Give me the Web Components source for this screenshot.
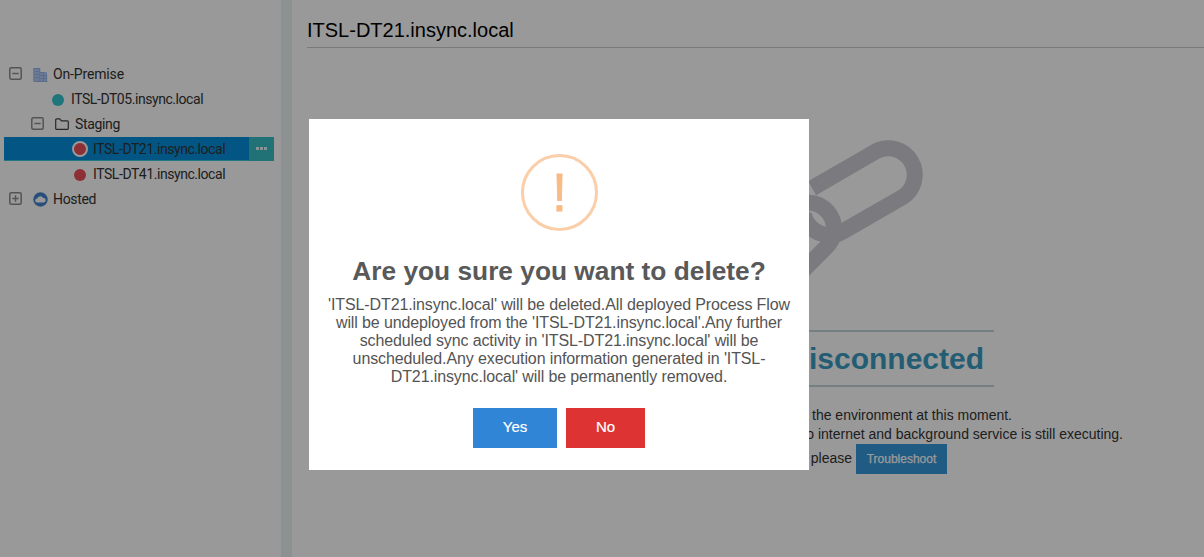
<!DOCTYPE html>
<html lang="en">
<head>
<meta charset="utf-8">
<title>Environments</title>
<style>
html,body{margin:0;height:100%;overflow:hidden;background:#fff}
body{font-family:"Liberation Sans",Arial,sans-serif}
</style>
</head>
<body>
<app-shell></app-shell>
<script>
function define(name, html) {
  const t = document.createElement('template');
  t.innerHTML = html;
  customElements.define(name, class extends HTMLElement {
    constructor() {
      super();
      this.attachShadow({mode: 'open'}).appendChild(t.content.cloneNode(true));
    }
  });
}

define('tree-toggle', `<style>
:host{display:block;width:13px;height:13px;flex:none;margin-top:-2px}
svg{display:block}
.v{display:none}
:host([closed]) .v{display:block}
</style><svg width="13" height="13" fill="none" stroke="#8c8c8c" stroke-width="1.5"><rect x=".8" y=".8" width="11.4" height="11.4" rx="1.5"/><path d="M3.3 6.5h6.4"/><path class="v" d="M6.5 3.3v6.4"/></svg>`);

define('status-dot', `<style>
:host{display:block;box-sizing:border-box;width:12px;height:12px;border-radius:50%;background:var(--dot,#e9505a);flex:none}
:host([ring]){width:16px;height:16px;border:2px solid #fff}
</style>`);

define('tree-row', `<style>
:host{display:flex;height:25px;align-items:center;box-sizing:border-box;padding-left:var(--indent,5px);font:14px/25px Roboto,sans-serif;color:#333;white-space:nowrap}
.label{letter-spacing:var(--track,-.44px)}
.bar{display:flex;align-items:center;flex:1;height:24px}
:host([selected]){padding-left:0;align-items:flex-start}
:host([selected]) .bar{background:#0590dd;height:23px;padding-left:var(--indent);border-bottom:1px solid #37c6d0}
:host([selected]) .label{padding-top:2px}
.more{display:none}
:host([selected]) .more{display:flex;width:25px;height:24px;background:#37bfc6;align-items:center;justify-content:center;gap:1px}
.more i{width:3px;height:3px;background:#fff;margin-bottom:1px;opacity:.85}
.gap{width:var(--gap,5px);flex:none}
</style><div class="bar"><slot name="icon"></slot><span class="gap"></span><span class="label"><slot></slot></span></div><div class="more"><i></i><i></i><i></i></div>`);

define('env-tree', `<style>
:host{display:block;width:281px;box-sizing:border-box;padding:62px 7px 0 4px;flex:none}
.ic{display:flex;align-items:center}
svg{display:block}
</style>
<tree-row style="--gap:5px;--track:-.15px"><div class="ic" slot="icon"><tree-toggle></tree-toggle><svg style="margin-left:11px" width="15" height="15" viewBox="0 0 15 15"><path d="M1 1h6v13H1zM7 5h7v9H7z" fill="#b5cdf5"/><path d="M.5 14.5h14M.8 1v13M6.8 1v13M10.5 5v9M13.6 7v7M1 1.5h6M7 5.5h4M11 8.5h3M2.5 4.5h3M2.5 7.5h3M2.5 10.5h3M8 8.5h2M8 11.5h5" fill="none" stroke="#8fb0e6" stroke-width=".9"/></svg></div>On-Premise</tree-row>
<tree-row style="--indent:48px;--gap:7px"><status-dot slot="icon" style="--dot:#33c5cf"></status-dot>ITSL-DT05.insync.local</tree-row>
<tree-row style="--indent:27px;--gap:6px;--track:-.35px"><div class="ic" slot="icon"><tree-toggle></tree-toggle><svg style="margin-left:11px;margin-top:-2px" width="14" height="12" fill="none" stroke="#444" stroke-width="1.2"><path d="M.7 10.5V1.8q0-1 1-1h3l1.7 2h6q.9 0 .9.9v6.8q0 .8-.8.8H1.5q-.8 0-.8-.8z"/></svg></div>Staging</tree-row>
<tree-row selected style="--indent:68px;--gap:5px"><status-dot ring slot="icon"></status-dot>ITSL-DT21.insync.local</tree-row>
<tree-row style="--indent:70px;--gap:7px"><status-dot slot="icon"></status-dot>ITSL-DT41.insync.local</tree-row>
<tree-row style="--gap:5px;--track:-.35px"><div class="ic" slot="icon"><tree-toggle closed></tree-toggle><svg style="margin-left:11px" width="15" height="15"><circle cx="7.5" cy="7.5" r="7.2" fill="#4384cf"/><path d="M4.2 10.5a2 2 0 0 1 0-4 3.2 3.2 0 0 1 6-.4 2.2 2.2 0 0 1 .5 4.4z" fill="#fff"/></svg></div>Hosted</tree-row>`);

define('link-picture', `<style>:host{display:block;height:150px;width:140px}svg{display:block}</style>
<svg width="140" height="150" viewBox="789.4 130 140 150" fill="none" stroke="#cbcbd4" stroke-width="16"><path d="M811.5 188.2L875.2 151.4A26.5 26.5 0 0 1 901.8 197.2L842.2 231.5A26.5 26.5 0 0 1 803 214"/><path d="M790 209A26 26 0 0 1 824.4 248.4L795 277.8"/></svg>`);

define('env-detail', `<style>
:host{display:flex;flex-direction:column;flex:1;min-width:0;padding-left:15px;color:#333;font-size:14px}
h1{margin:0;height:47px;border-bottom:1px solid #ccc;font:400 20px/60px "Liberation Sans",Arial,sans-serif;color:#000}
.body{display:flex;flex-direction:column;align-items:flex-end}
link-picture{margin:82px 274px 0 0}
h2{margin:50px 210px 0 0;width:484px;height:57px;border:solid #c3d3d9;border-width:2px 0;box-sizing:border-box;font:700 30px/53px "Liberation Sans",Arial,sans-serif;color:#3b9bc2;text-align:right;padding-right:10px}
p{margin:0;line-height:19px;white-space:nowrap}
.help{display:flex;align-items:center;gap:4px;margin-right:257px;height:30px}
.help span{margin-bottom:2px}
button{font:12px "Liberation Sans",Arial,sans-serif;color:#fff;background:#3498db;border:0;padding:0;width:91px;height:30px;-webkit-text-stroke:.25px #fff}
</style>
<h1>ITSL-DT21.insync.local</h1>
<div class="body"><link-picture></link-picture><h2>Disconnected</h2>
<p style="margin:19px 192px 0 0">the environment at this moment.</p>
<p style="margin-right:81px">to internet and background service is still executing.</p>
<div class="help"><span>please</span><button>Troubleshoot</button></div></div>`);

define('confirm-dialog', `<style>
:host{display:flex;flex-direction:column;align-items:center;box-sizing:border-box;width:500px;height:351px;padding-top:35px;background:#fff;color:#545454;text-align:center}
.badge{width:77px;height:77px;box-sizing:border-box;border:3px solid #facea8;border-radius:50%;font-size:54px;line-height:70px;color:#f8bb86;-webkit-text-stroke:.8px #f8bb86;padding-left:1px}
h2{margin:24px 0 0;font-size:26.3px;line-height:32px;color:#595959;white-space:nowrap}
p{margin:9px 0 0;font-size:16px;line-height:18px;width:470px;letter-spacing:-.115px}
.actions{display:flex;gap:9px;margin:22px 0 0}
button{font:15px "Liberation Sans",Arial,sans-serif;color:#fff;border:0;padding:0 0 3px;height:40px;-webkit-text-stroke:.2px #fff}
.yes{background:#3085d6;width:84px}.no{background:#d33;width:79px}
</style><div class="badge">!</div><h2>Are you sure you want to delete?</h2><p><slot></slot></p><div class="actions"><button class="yes">Yes</button><button class="no">No</button></div>`);

define('app-shell', `<style>
:host{display:flex;width:100%;height:100vh;background:#fff}
.split{width:11px;background:#e9f2f4;flex:none}
.shade{position:absolute;inset:0;background:rgba(0,0,0,.4);box-sizing:border-box;padding:119px 0 0 309px}
</style><env-tree></env-tree><div class="split"></div><env-detail></env-detail>
<div class="shade"><confirm-dialog>'ITSL-DT21.insync.local' will be deleted.All deployed Process Flow will be undeployed from the 'ITSL-DT21.insync.local'.Any further scheduled sync activity in 'ITSL-DT21.insync.local' will be unscheduled.Any execution information generated in 'ITSL-DT21.insync.local' will be permanently removed.</confirm-dialog></div>`);
</script>
</body>
</html>
